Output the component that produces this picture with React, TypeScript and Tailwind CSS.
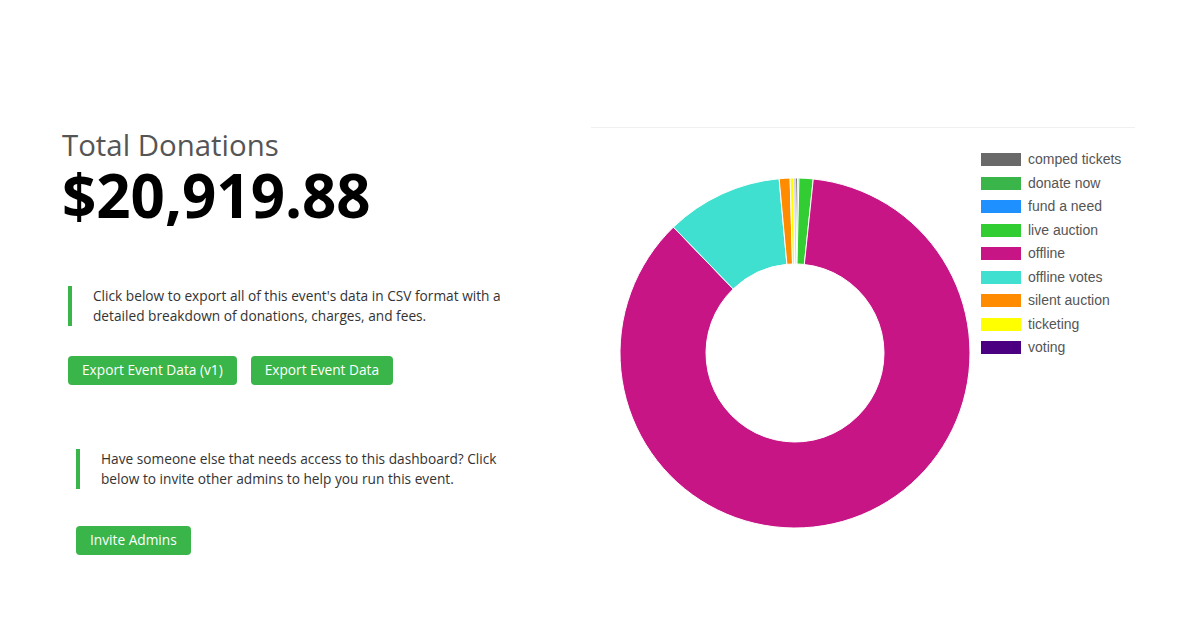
import React from "react";

type Slice = { label: string; color: string; from: number; to: number };

const slices: Slice[] = [
  { label: "comped tickets", color: "#696969", from: 0, to: 0.8 },
  { label: "donate now", color: "#39b54a", from: 0.8, to: 1.3 },
  { label: "fund a need", color: "#1e90ff", from: 1.3, to: 1.3 },
  { label: "live auction", color: "#32cd32", from: 1.3, to: 6 },
  { label: "offline", color: "#c71585", from: 6, to: 316 },
  { label: "offline votes", color: "#40e0d0", from: 316, to: 354.8 },
  { label: "silent auction", color: "#ff8c00", from: 354.8, to: 358.4 },
  { label: "ticketing", color: "#ffff00", from: 358.4, to: 359.7 },
  { label: "voting", color: "#4b0082", from: 359.7, to: 360 },
];

const CX = 175;
const CY = 175;
const R = 175;
const r = 89;

const point = (deg: number, rad: number) => {
  const a = (deg * Math.PI) / 180;
  return `${(CX + rad * Math.sin(a)).toFixed(2)} ${(CY - rad * Math.cos(a)).toFixed(2)}`;
};

const wedge = (from: number, to: number) => {
  const large = to - from > 180 ? 1 : 0;
  return [
    `M ${point(from, R)}`,
    `A ${R} ${R} 0 ${large} 1 ${point(to, R)}`,
    `L ${point(to, r)}`,
    `A ${r} ${r} 0 ${large} 0 ${point(from, r)}`,
    "Z",
  ].join(" ");
};

const Donut = () => (
  <svg width="350" height="350" viewBox="0 0 350 350" className="shrink-0">
    {slices
      .filter((s) => s.to > s.from)
      .map((s) => (
        <path key={s.label} d={wedge(s.from, s.to)} fill={s.color} stroke="#fff" strokeWidth="1" />
      ))}
  </svg>
);

const Note = ({ children, className }: { children: React.ReactNode; className: string }) => (
  <div className={`border-l-4 border-[#39b54a] pl-[21px] text-[13.7px] leading-[20px] text-[#333] ${className}`}>
    {children}
  </div>
);

const GreenButton = ({ children }: { children: React.ReactNode }) => (
  <button className="h-[29px] rounded-[4px] bg-[#39b54a] px-[14px] text-[13.7px] text-white">
    {children}
  </button>
);

export default function App() {
  return (
    <div className="flex h-[630px] w-[1200px] bg-white" style={{ fontFamily: "'Open Sans', sans-serif" }}>
      <div className="w-[591px] shrink-0 pl-[62px] pt-[128px]">
        <h2 className="text-[29.4px] leading-[34px] text-[#555]">Total Donations</h2>
        <div className="text-[60px] font-bold leading-[66px] text-black">$20,919.88</div>

        <Note className="ml-[6px] mt-[58px] w-[438px]">
          Click below to export all of this event's data in CSV format with a detailed breakdown of donations,
          charges, and fees.
        </Note>
        <div className="ml-[6px] mt-[30px] flex gap-[14px]">
          <GreenButton>Export Event Data (v1)</GreenButton>
          <GreenButton>Export Event Data</GreenButton>
        </div>

        <Note className="ml-[14px] mt-[64px] w-[430px]">
          Have someone else that needs access to this dashboard? Click below to invite other admins to help you
          run this event.
        </Note>
        <div className="ml-[14px] mt-[37px] flex">
          <GreenButton>Invite Admins</GreenButton>
        </div>
      </div>

      <div className="mt-[127px] flex h-[410px] w-[544px] shrink-0 items-start border-t border-[#f0f0f0] pt-[20px]">
        <div className="ml-[29px] mt-[30px]">
          <Donut />
        </div>
        <ul className="ml-[11px] flex flex-col" style={{ fontFamily: "'Liberation Sans', Arial, sans-serif" }}>
          {slices.map((s) => (
            <li key={s.label} className="flex h-[23.5px] items-center gap-[7px] text-[14px] text-[#555]">
              <span className="h-[13px] w-[40px]" style={{ backgroundColor: s.color }} />
              {s.label}
            </li>
          ))}
        </ul>
      </div>
    </div>
  );
}
